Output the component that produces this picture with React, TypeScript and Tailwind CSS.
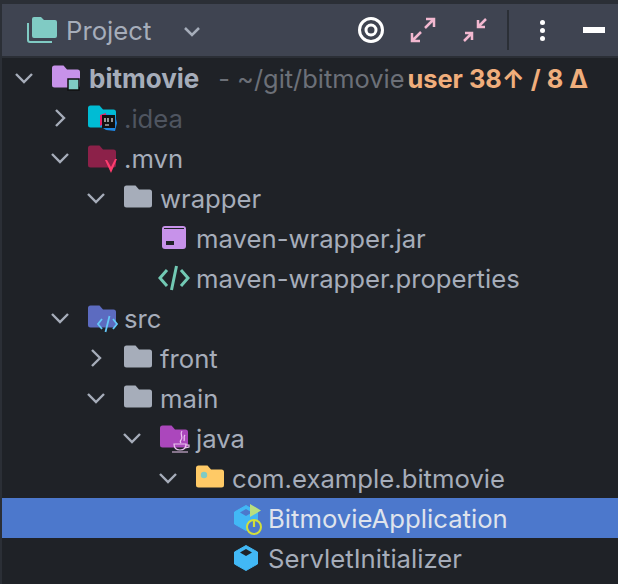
import type { ReactNode } from "react";

function FolderIcon({ color, children }: { color: string; children?: ReactNode }) {
  return (
    <svg width="30" height="26" viewBox="0 0 30 26" className="overflow-visible">
      <path
        d="M0 3A2.500 2.500 0 0 1 2.500 0.500H11.500L15 4.500H25.500A2.500 2.500 0 0 1 28 7V20A2.500 2.500 0 0 1 25.500 22.500H2.500A2.500 2.500 0 0 1 0 20Z"
        fill={color}
      />
      {children}
    </svg>
  );
}

function Chevron({ open }: { open: boolean }) {
  return (
    <svg width="20" height="20" viewBox="0 0 20 20" fill="none" stroke="#a6adba" strokeWidth="2.400">
      {open ? <path d="M2 6L10 14L18 6" /> : <path d="M6 2L14 10L6 18" />}
    </svg>
  );
}

function CubeIcon({ run }: { run?: boolean }) {
  return (
    <svg width="30" height="28" viewBox="0 0 30 28" className="ml-[2px] shrink-0 overflow-visible">
      <path d="M12 1.500L23.500 8V20L12 26.500L0.500 20V8Z" fill="#42b8f5" stroke="#42b8f5" strokeWidth="1" strokeLinejoin="round" />
      <path d="M12 5L18 8.500L12 12L6 8.500Z" fill={run ? "#4c78cc" : "#1f2227"} />
      {run && (
        <>
          <path d="M16 0L27 6.500L16 13Z" fill="#b9e07f" />
          <circle cx="20" cy="23" r="7" fill="#4c78cc" stroke="#d3df3a" strokeWidth="2" />
          <path d="M20 16V23" stroke="#d3df3a" strokeWidth="2.200" />
        </>
      )}
    </svg>
  );
}

const icons: Record<string, ReactNode> = {
  root: (
    <FolderIcon color="#c792ea">
      <rect x="16" y="14" width="11" height="11" fill="#80cbc4" stroke="#111" strokeWidth="1.500" />
    </FolderIcon>
  ),
  idea: (
    <FolderIcon color="#00bcd4">
      <path d="M13 13L18 9L27 10L29 18L27 26L18 25L12 21Z" fill="#1e88e5" />
      <path d="M12 10L18 8L17 18L12 21Z" fill="#e91e63" />
      <rect x="14" y="10" width="13" height="13" fill="#111" />
      <path d="M17 13V17M20 13V17M24 13V17M17 20H21" stroke="#eee" strokeWidth="1.200" />
    </FolderIcon>
  ),
  mvn: (
    <FolderIcon color="#8c2149">
      <path d="M19 15L23 22L27 14L29 14L23 28L17 15Z" fill="#ff3d6e" />
    </FolderIcon>
  ),
  plain: <FolderIcon color="#a6adba" />,
  jar: (
    <svg width="26" height="26" viewBox="0 0 26 26" className="ml-[2px]">
      <path d="M3 1H21A3 3 0 0 1 24 4V21A3 3 0 0 1 21 24H3A3 3 0 0 1 0 21V4A3 3 0 0 1 3 1Z" fill="#c792ea" />
      <path d="M2 3.500H22" stroke="#1f2227" strokeWidth="1" />
      <rect x="4" y="16" width="8" height="4" fill="#1f2227" />
    </svg>
  ),
  xml: (
    <svg width="32" height="24" viewBox="0 0 32 24" fill="none" stroke="#72c9b4" strokeWidth="3" className="-ml-[2px] overflow-visible">
      <path d="M9 4L2 12L9 20M23 4L30 12L23 20M18.500 0L13.500 24" />
    </svg>
  ),
  src: (
    <FolderIcon color="#5c6bc0">
      <g fill="none" stroke="#64c8f8" strokeWidth="1.800">
        <path d="M14 14L10 19L14 24M25 14L29 19L25 24M21.500 11L17.500 27" />
      </g>
    </FolderIcon>
  ),
  java: (
    <FolderIcon color="#ab47bc">
      <g fill="none" stroke="#ecc6f0" strokeWidth="1.200">
        <path d="M22 6C19 10 24 11 21 15C20 16 20 17 21 18M25 10C23 12 25 13 24 16" />
        <path d="M14 19H26C26 23 24 25 20 25C16 25 14 23 14 19ZM26 20H29V22L25 23M12 27H28" />
      </g>
    </FolderIcon>
  ),
  pkg: (
    <FolderIcon color="#ffca66">
      <circle cx="8" cy="10" r="3.200" fill="#80cbc4" />
    </FolderIcon>
  ),
  app: <CubeIcon run />,
  cube: <CubeIcon />,
};

type Node = {
  depth: number;
  open?: boolean;
  icon: string;
  name: string;
  dim?: boolean;
  selected?: boolean;
};

const rows: Node[] = [
  { depth: 1, open: false, icon: "idea", name: ".idea", dim: true },
  { depth: 1, open: true, icon: "mvn", name: ".mvn" },
  { depth: 2, open: true, icon: "plain", name: "wrapper" },
  { depth: 3, icon: "jar", name: "maven-wrapper.jar" },
  { depth: 3, icon: "xml", name: "maven-wrapper.properties" },
  { depth: 1, open: true, icon: "src", name: "src" },
  { depth: 2, open: false, icon: "plain", name: "front" },
  { depth: 2, open: true, icon: "plain", name: "main" },
  { depth: 3, open: true, icon: "java", name: "java" },
  { depth: 4, open: true, icon: "pkg", name: "com.example.bitmovie" },
  { depth: 5, icon: "app", name: "BitmovieApplication", selected: true },
  { depth: 5, icon: "cube", name: "ServletInitializer" },
];

const indents = ["pl-[4px]", "pl-[40px]", "pl-[76px]", "pl-[112px]", "pl-[148px]", "pl-[184px]"];

function Row({ node }: { node: Node }) {
  return (
    <div
      className={`flex h-10 items-center ${indents[node.depth]} ${node.selected ? "bg-[#4c78cc]" : ""}`}
    >
      <div className="flex w-9 justify-center">
        {node.open !== undefined && <Chevron open={node.open} />}
      </div>
      <div className="flex w-[46px] justify-start pl-[10px]">{icons[node.icon]}</div>
      <span
        className={`pt-[2px] ${
          node.dim ? "text-[#4f5560]" : node.selected ? "text-[#dfe3ec]" : "text-[#a6adba]"
        }`}
      >
        {node.name}
      </span>
    </div>
  );
}

export default function App() {
  return (
    <div className="h-[584px] w-[618px] overflow-hidden bg-[#2b2f36] pt-[4px] pl-[2px] font-['Inter',sans-serif] text-[25.700px] leading-none">
      <div className="flex h-[52px] items-center bg-[#3f4451] pl-[24px]">
        <svg width="32" height="28" viewBox="0 0 32 28">
          <path d="M6 3A2 2 0 0 1 8 1H15L18 4H29A2 2 0 0 1 31 6V20A2 2 0 0 1 29 22H8A2 2 0 0 1 6 20Z" fill="#80cbc4" />
          <path d="M2 7V24A2 2 0 0 0 4 26H26" fill="none" stroke="#80cbc4" strokeWidth="2" />
        </svg>
        <span className="ml-[8px] pt-[2px] text-[#a6adba]">Project</span>
        <svg width="16" height="10" viewBox="0 0 16 10" fill="none" stroke="#a6adba" strokeWidth="2.500" className="ml-[33px] mt-[3px]">
          <path d="M1 1L8 8L15 1" />
        </svg>
        <div className="ml-auto flex items-center pr-[13px]">
          <svg width="28" height="28" viewBox="0 0 28 28" fill="none" stroke="#fff">
            <circle cx="14" cy="14" r="11.500" strokeWidth="3" />
            <circle cx="14" cy="14" r="5" strokeWidth="3" />
          </svg>
          <svg width="26" height="26" viewBox="0 0 26 26" fill="none" stroke="#f2b8d0" strokeWidth="2.500" className="ml-[25px]">
            <path d="M15 11L24 2M16 2H24V10M11 15L2 24M2 16V24H10" />
          </svg>
          <svg width="26" height="26" viewBox="0 0 26 26" fill="none" stroke="#f2b8d0" strokeWidth="2.500" className="ml-[26px]">
            <path d="M24 2L16 10M16 3V10H23M2 24L10 16M3 16H10V23" />
          </svg>
          <div className="ml-[19px] h-[40px] w-[2px] bg-[#2b2f36]" />
          <div className="ml-[31px] flex flex-col gap-[3px]">
            <div className="size-[5px] rounded-full bg-white" />
            <div className="size-[5px] rounded-full bg-white" />
            <div className="size-[5px] rounded-full bg-white" />
          </div>
          <div className="ml-[38px] h-[6px] w-[22px] bg-white" />
        </div>
      </div>
      <div className="h-full border-t-2 border-[#2b2f36] bg-[#1f2227]">
        <div className="flex h-10 items-center pl-[4px]">
          <div className="flex w-9 justify-center">
            <Chevron open />
          </div>
          <div className="flex w-[47px] pl-[10px]">{icons.root}</div>
          <span className="pt-[2px] text-[26px] font-bold text-[#a6adba]">bitmovie</span>
          <span className="ml-[19px] pt-[2px] text-[25.400px] text-[#6c7078]">- ~/git/bitmovie</span>
          <span className="ml-[3px] pt-[2px] text-[25.400px] font-bold text-[#f0ae7c]">user 38↑ / 8 Δ</span>
        </div>
        {rows.map((r) => (
          <Row key={r.name} node={r} />
        ))}
      </div>
    </div>
  );
}
